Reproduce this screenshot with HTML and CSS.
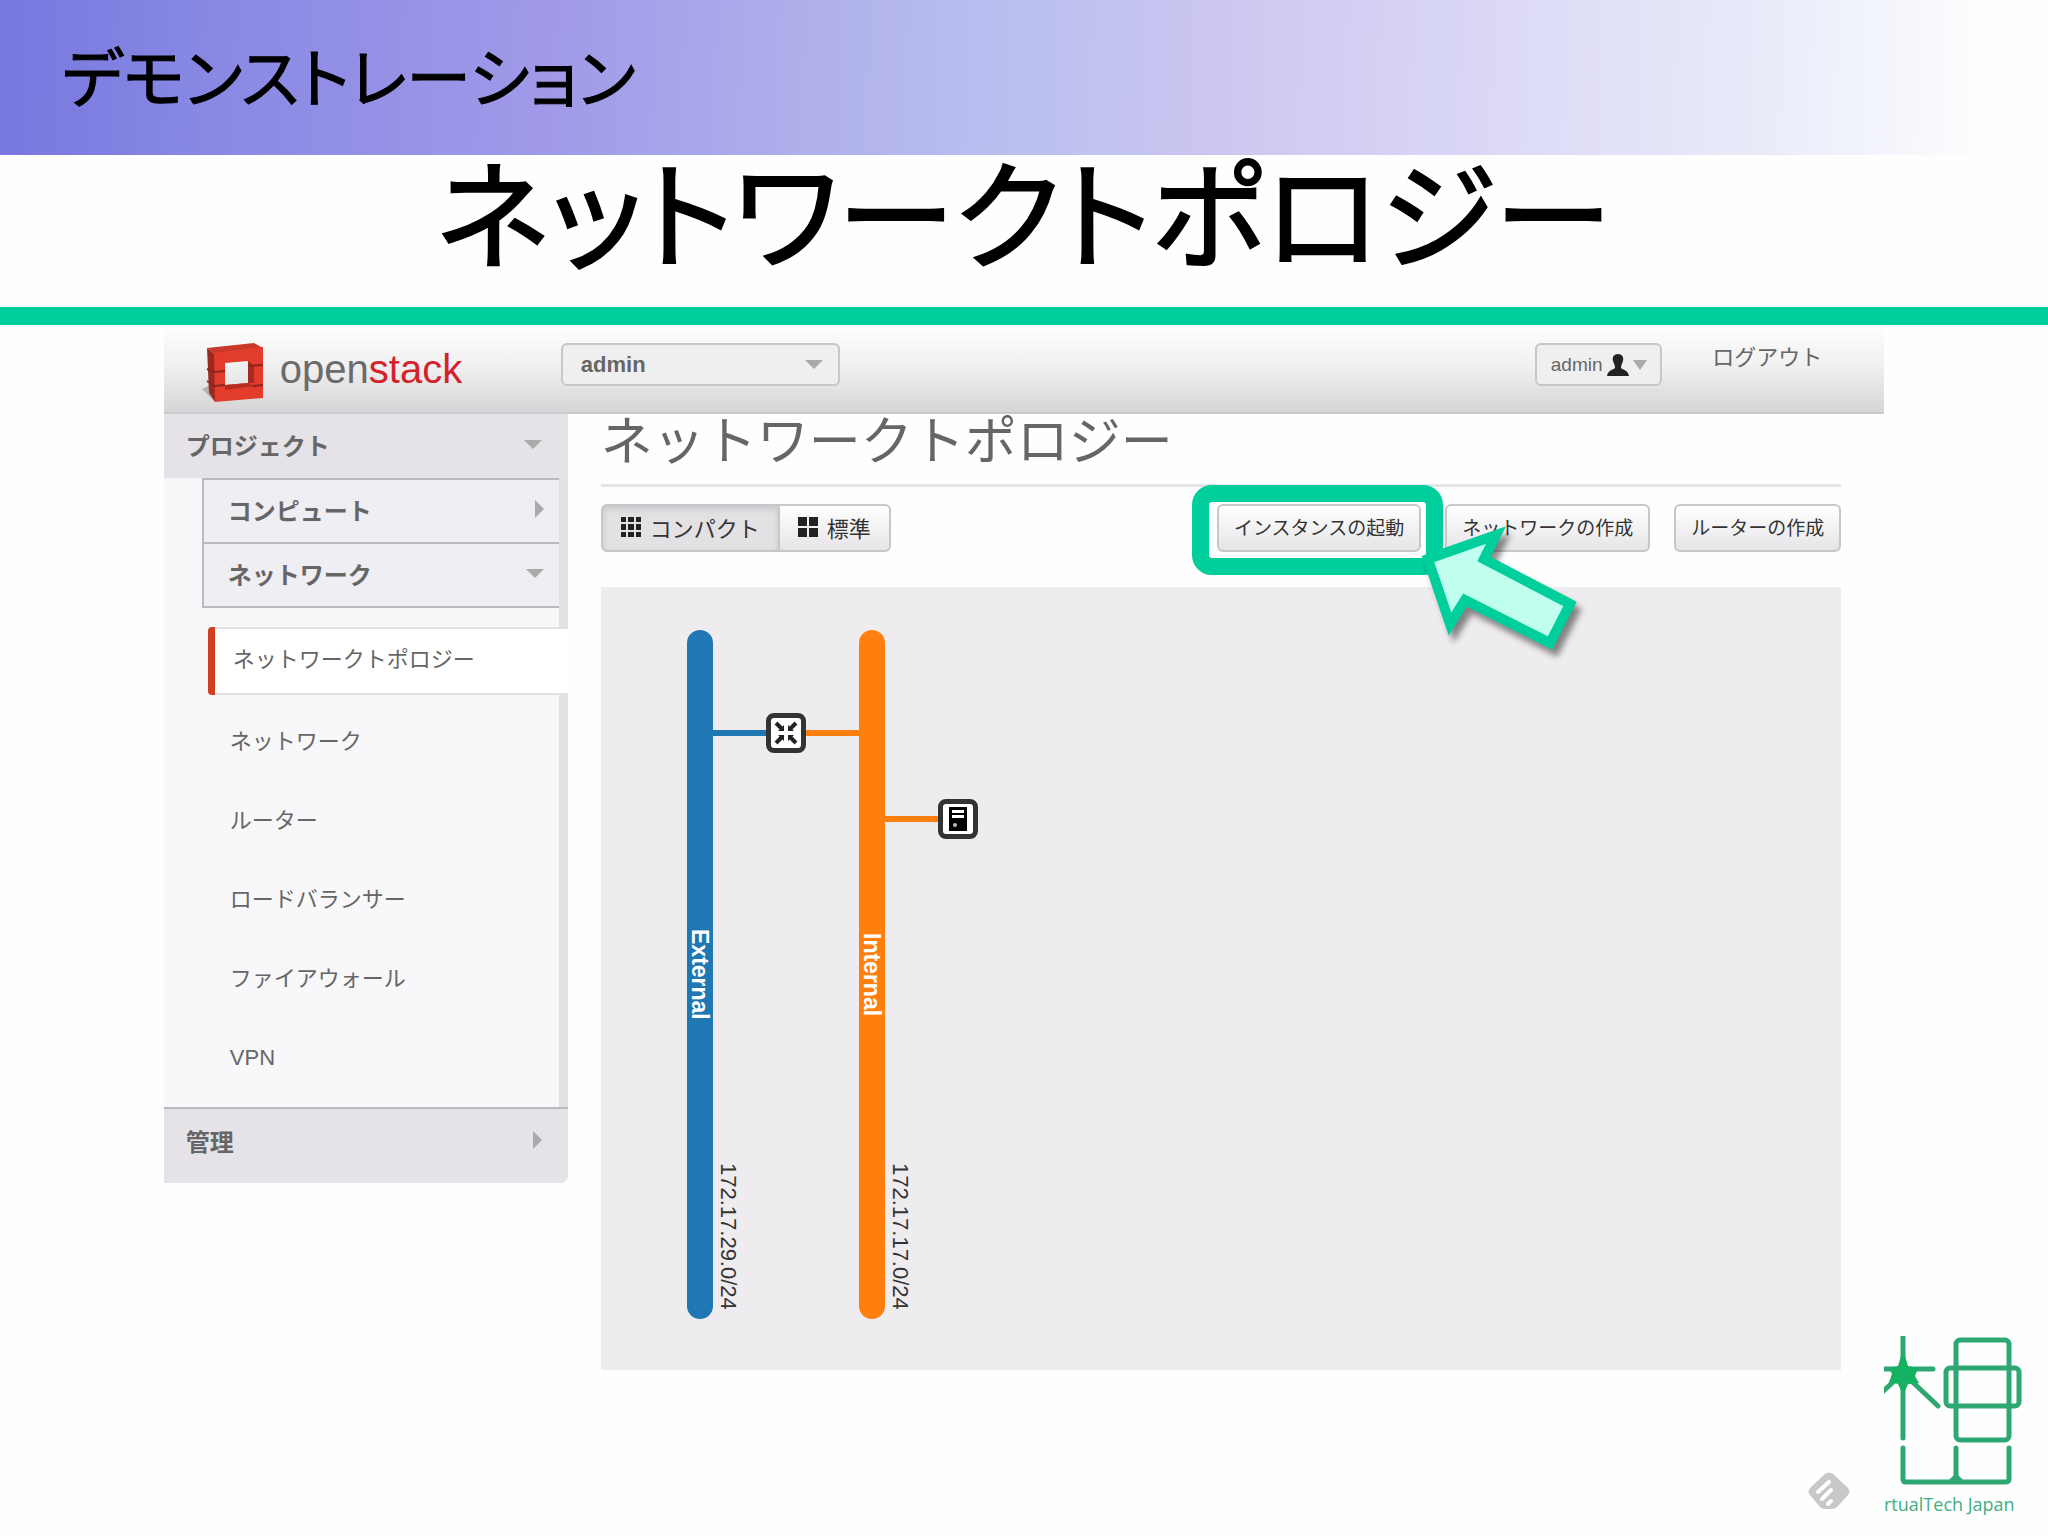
FILE: index.html
```html
<!DOCTYPE html>
<html lang="ja">
<head>
    <meta charset="UTF-8">
    <meta name="viewport" content="width=device-width, initial-scale=1.0">
    <title>ネットワークトポロジー</title>
    <link rel="stylesheet" href="styles.css">
</head>
<body>
    <div class="slide-band">デモンストレーション</div>
    <h1 class="slide-title">ネットワークトポロジー</h1>

    <div class="app">
        <header class="topbar">
            <a class="brand" href="#">
                <svg class="brand-icon" width="64" height="60" viewBox="0 0 64 60">
                    <path d="M0 46l12 12-4-16z" fill="#b9b4b4"/>
                    <path d="M5 5l8 6v48l-6-9z" fill="#9c2a20"/>
                    <path d="M5 5L52 0l9 5-48 6z" fill="#c8392c"/>
                    <path fill-rule="evenodd" d="M12 10l49-6v51l-48 4zM23 20v22l23-2V18z" fill="#e23c2c"/>
                    <path d="M46 18l6 4v18h-6z" fill="#a92a20"/>
                    <path d="M23 42l23-2 6 3-29 4z" fill="#b52d22"/>
                    <path d="M5 26l8 3 10-1M5 38l8 5 10-1M46 23l15-1M50 43l11-1" stroke="#8f241b" stroke-width="2" fill="none"/>
                </svg>
                <span class="brand-name">open<span>stack</span></span>
            </a>
            <div class="project-select">
                <select aria-label="プロジェクト">
                    <option>admin</option>
                </select>
                <i class="caret-down"></i>
            </div>
            <button type="button" class="user-button">
                admin
                <svg width="22" height="22" viewBox="0 0 22 22"><path d="M11 0c4 0 6 3 5 7-1 3-2 4-2 7 2 2 7 2 8 8H0c1-6 6-6 8-8 0-3-1-4-2-7C5 3 7 0 11 0z" fill="#222"/></svg>
                <i class="caret-down"></i>
            </button>
            <a class="logout" href="#">ログアウト</a>
        </header>

        <div class="columns">
            <nav class="sidebar">
                <a class="section" href="#">プロジェクト<i class="caret-down"></i></a>
                <div class="panels">
                    <a class="panel" href="#">コンピュート<i class="caret-right"></i></a>
                    <a class="panel" href="#">ネットワーク<i class="caret-down"></i></a>
                </div>
                <ul class="links">
                    <li><a class="active" href="#">ネットワークトポロジー</a></li>
                    <li><a href="#">ネットワーク</a></li>
                    <li><a href="#">ルーター</a></li>
                    <li><a href="#">ロードバランサー</a></li>
                    <li><a href="#">ファイアウォール</a></li>
                    <li><a href="#">VPN</a></li>
                </ul>
                <a class="section last" href="#">管理<i class="caret-right"></i></a>
            </nav>

            <main class="content">
                <h2>ネットワークトポロジー</h2>
                <div class="toolbar">
                    <div class="toggle">
                        <button type="button" class="pressed">
                            <svg width="20" height="20" viewBox="0 0 20 20"><path d="M0 0h5v5H0zM7 0h6v5H7zM15 0h5v5h-5zM0 7h5v6H0zM7 7h6v6H7zM15 7h5v6h-5zM0 15h5v5H0zM7 15h6v5H7zM15 15h5v5h-5z" fill="#222"/></svg>
                            コンパクト
                        </button>
                        <button type="button">
                            <svg width="20" height="20" viewBox="0 0 20 20"><path d="M0 0h9v9H0zM11 0h9v9h-9zM0 11h9v9H0zM11 11h9v9h-9z" fill="#222"/></svg>
                            標準
                        </button>
                    </div>
                    <div class="actions">
                        <div class="marked">
                            <button type="button">インスタンスの起動</button>
                            <div class="highlight"></div>
                            <svg class="arrow" width="190" height="150" viewBox="0 0 190 150">
                                <path d="M21 44L89 20 77 44 163 89 143 128 58 85 43 109z" fill="#c0fff0" stroke="#00ce9b" stroke-width="10" stroke-miterlimit="10"/>
                            </svg>
                        </div>
                        <button type="button">ネットワークの作成</button>
                        <button type="button">ルーターの作成</button>
                    </div>
                </div>

                <div class="topology">
                    <div class="network external">
                        <span class="name">External</span>
                        <span class="cidr">172.17.29.0/24</span>
                    </div>
                    <div class="network internal">
                        <span class="name">Internal</span>
                        <span class="cidr">172.17.17.0/24</span>
                    </div>
                    <div class="link router-external"></div>
                    <div class="link router-internal"></div>
                    <div class="link server-internal"></div>
                    <div class="node router">
                        <svg width="24" height="24" viewBox="0 0 24 24">
                            <path d="M2 2l6 6M22 2l-6 6M2 22l6-6M22 22l-6-6" stroke="#222" stroke-width="4"/>
                            <path d="M10 4v6H4zM14 4v6h6zM10 20v-6H4zM14 20v-6h6z" fill="#222"/>
                        </svg>
                    </div>
                    <div class="node server">
                        <svg width="18" height="24" viewBox="0 0 18 24">
                            <path d="M0 0h18v24H0z" fill="#000"/>
                            <path d="M3 3h12v3H3zM3 8h12v3H3z" fill="#fff"/>
                            <circle cx="6" cy="18" r="2" fill="#bbb"/>
                        </svg>
                    </div>
                </div>
            </main>
        </div>
    </div>

    <div class="marks">
        <svg class="diamond" width="42" height="38" viewBox="0 0 42 38">
            <path d="M17 2q4-3 8 0l15 14q3 4 0 7L29 35q-2 2-5 2h-7q-3 0-5-2L2 23q-3-3 0-7z" fill="#c9c7ca"/>
            <path d="M10 20L21 10M14 27l9-9M20 32l3-3" stroke="#fff" stroke-width="4" stroke-linecap="round"/>
        </svg>
        <div class="company">
            <svg width="140" height="152" viewBox="0 0 140 152">
                <g fill="none" stroke="#2ea873" stroke-width="5" stroke-linecap="round" stroke-linejoin="round">
                    <path d="M19 1v101M-4 33h53M19 37L-4 58M19 37l35 33"/>
                    <rect x="72" y="4" width="53" height="100" rx="4"/>
                    <rect x="62" y="32" width="73" height="38" rx="4"/>
                    <path d="M19 112v31q0 3 3 3h99q4 0 4-3v-31M72 112v34"/>
                </g>
                <path d="M17 20h4l3 10 10 2-3 8 4 7-11 1-5 11-5-11-9-2 3-8-3-6 9-2z" fill="#14b262"/>
                <path d="M63 146l9-9 9 9z" fill="#2ea873"/>
            </svg>
            <span>rtualTech Japan</span>
        </div>
    </div>
</body>
</html>
```

FILE: styles.css
```css
* {
    box-sizing: border-box;
}

body {
    margin: 0;
    min-height: 100vh;
    position: relative;
    background-color: #fefefe;
    color: #666;
    font-family: "Liberation Sans", "Noto Sans CJK JP", sans-serif;
    font-size: 22px;
}

a {
    color: inherit;
    text-decoration: none;
}

button,
select {
    font-family: inherit;
    cursor: pointer;
}

/* slide heading */
.slide-band {
    height: 155px;
    padding: 32px 62px;
    background: linear-gradient(92deg, #7777df 0%, #8888e4 10%, #a09ae8 27%, #b2b4ec 42%, #bbc0f0 50%, #cbc6f0 59%, #dcdaf6 74%, #eceefa 88%, #fefefe 97%);
    color: #000;
    font-size: 65px;
    line-height: 96px;
    font-feature-settings: "palt";
    -webkit-text-stroke: 1px #000;
}

.slide-title {
    margin: 0;
    padding: 4px 0 28px;
    border-bottom: 18px solid #00ce9b;
    color: #000;
    font-size: 118px;
    font-weight: 400;
    line-height: 120px;
    text-align: center;
    font-feature-settings: "palt";
    -webkit-text-stroke: 2px #000;
}

.app {
    margin: 0 8%;
}

.caret-down {
    border: 9px solid transparent;
    border-top: 9px solid #aaa;
    border-bottom: 0;
}

.caret-right {
    border: 9px solid transparent;
    border-left: 9px solid #aaa;
    border-right: 0;
}

/* top bar */
.topbar {
    display: flex;
    align-items: flex-start;
    height: 89px;
    padding: 18px 62px 0 38px;
    background: linear-gradient(#fefefe, #f0efef 50%, #d6d4d6);
    border-bottom: 2px solid #ccc9cc;
}

.brand {
    display: flex;
    gap: 14px;
    width: 359px;
}

.brand-name {
    font-size: 40px;
    line-height: 52px;
    color: #6b6b6d;
}

.brand-name span {
    color: #d3222a;
}

.project-select {
    position: relative;
    width: 279px;
}

.project-select select {
    appearance: none;
    width: 100%;
    height: 43px;
    padding: 0 18px;
    border: 2px solid #c8c6c8;
    border-radius: 6px;
    background-color: #f0efef;
    color: #666;
    font-size: 22px;
    font-weight: bold;
}

.project-select .caret-down {
    position: absolute;
    top: 17px;
    right: 17px;
    pointer-events: none;
}

.user-button {
    display: flex;
    align-items: center;
    justify-content: center;
    gap: 4px;
    width: 127px;
    height: 43px;
    margin-left: auto;
    padding: 0;
    border: 2px solid #c8c6c8;
    border-radius: 6px;
    background-color: #f0efef;
    color: #666;
    font-size: 19px;
}

.user-button .caret-down {
    border-width: 10px 7px 0;
}

.logout {
    margin-left: 50px;
    line-height: 30px;
}

/* sidebar */
.columns {
    display: flex;
    align-items: flex-start;
    gap: 33px;
}

.sidebar {
    width: 404px;
    background-color: #f8f7fa;
    border-radius: 0 0 8px 0;
    box-shadow: inset -9px 0 0 #e3e1e5;
}

.section,
.panel {
    display: flex;
    align-items: center;
    justify-content: space-between;
    height: 64px;
    font-size: 24px;
    font-weight: bold;
}

.section {
    padding: 0 26px 4px 22px;
    background-color: #e5e3e7;
}

.section.last {
    height: 76px;
    padding-bottom: 12px;
    border-top: 2px solid #bbb9bd;
    border-radius: 0 0 8px 0;
}

.panels {
    margin: 0 9px 0 38px;
    border-left: 2px solid #bbb9bd;
    border-bottom: 2px solid #bbb9bd;
}

.panel {
    padding: 0 15px 4px 24px;
    border-top: 2px solid #bbb9bd;
    background-color: #efeef2;
}

.links {
    display: flex;
    flex-direction: column;
    gap: 11px;
    margin: 0;
    padding: 19px 0 17px 44px;
    list-style: none;
}

.links a {
    display: block;
    height: 68px;
    padding-left: 22px;
    line-height: 72px;
}

.links .active {
    padding-left: 18px;
    border-left: 7px solid #d13f22;
    border-radius: 4px 0 0 4px;
    background-color: #fff;
    box-shadow: inset 0 2px 0 #e3e1e5, inset 0 -2px 0 #e3e1e5;
    line-height: 66px;
}

/* content */
.content {
    flex: 1;
    margin-right: 43px;
}

h2 {
    margin: 0;
    padding-bottom: 14px;
    border-bottom: 3px solid #e5e4e6;
    font-size: 52px;
    font-weight: 400;
    line-height: 56px;
}

.toolbar {
    display: flex;
    justify-content: space-between;
    margin: 17px 0 35px;
}

.toolbar button {
    height: 48px;
    padding: 0 15px 3px;
    border: 2px solid #c8c6c9;
    border-radius: 6px;
    background: linear-gradient(#fff, #e6e4e7);
    color: #333;
    font-size: 19px;
}

.toggle {
    display: flex;
}

.toggle button {
    display: flex;
    align-items: center;
    gap: 9px;
    padding: 0 18px 3px;
    font-size: 22px;
}

.toggle button:last-child {
    border-left: 0;
    border-radius: 0 6px 6px 0;
}

.toggle .pressed {
    border-radius: 6px 0 0 6px;
    background: #e3e1e4;
    box-shadow: inset 0 3px 6px #c8c6c9;
}

.actions {
    display: flex;
    gap: 24px;
}

.marked {
    position: relative;
}

.highlight {
    position: absolute;
    z-index: 1;
    top: -19px;
    right: -22px;
    bottom: -23px;
    left: -25px;
    border: 17px solid #00ce9b;
    border-radius: 20px;
    pointer-events: none;
}

.arrow {
    position: absolute;
    z-index: 2;
    top: 11px;
    left: 190px;
    overflow: visible;
    filter: drop-shadow(5px 7px 3px rgba(0, 0, 0, 0.45));
}

/* topology canvas */
.topology {
    position: relative;
    height: 783px;
    background-color: #eeecee;
}

.network {
    position: absolute;
    top: 43px;
    width: 26px;
    height: 689px;
    border-radius: 13px;
    display: flex;
    align-items: center;
    justify-content: center;
}

.external {
    left: 86px;
    background-color: #1f77b4;
}

.internal {
    left: 258px;
    background-color: #ff7f0e;
}

.name {
    writing-mode: vertical-rl;
    color: #fff;
    font-size: 23px;
    font-weight: bold;
    line-height: 26px;
}

.cidr {
    position: absolute;
    bottom: 9px;
    left: 28px;
    writing-mode: vertical-rl;
    color: #333;
    font-size: 22px;
    line-height: 26px;
}

.link {
    position: absolute;
    height: 6px;
    width: 54px;
    background-color: #ff7f0e;
}

.router-external {
    top: 143px;
    left: 112px;
    background-color: #1f77b4;
}

.router-internal {
    top: 143px;
    left: 204px;
}

.server-internal {
    top: 229px;
    left: 284px;
}

.node {
    position: absolute;
    display: flex;
    align-items: center;
    justify-content: center;
    width: 40px;
    height: 40px;
    border: 5px solid #333;
    border-radius: 8px;
    background-color: #fff;
}

.router {
    top: 126px;
    left: 165px;
}

.server {
    top: 212px;
    left: 337px;
}

/* marks in the corner of the slide */
.marks {
    position: absolute;
    right: 24px;
    bottom: 16px;
    display: flex;
    align-items: flex-end;
    gap: 34px;
}

.diamond {
    margin-bottom: 10px;
}

.company {
    display: flex;
    flex-direction: column;
    color: #3fae80;
    font-family: "Open Sans", sans-serif;
    font-size: 18px;
    line-height: 32px;
}

.company svg {
    overflow: hidden;
}
```
